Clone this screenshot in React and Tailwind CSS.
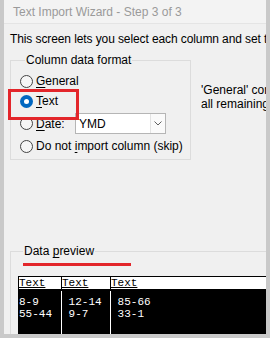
import React from 'react';

const ui = { fontFamily: '"Segoe UI", "Liberation Sans", Arial, sans-serif' };
const mono = { fontFamily: '"Liberation Mono", "Courier New", monospace' };

function Radio({ checked }) {
  if (checked) {
    return (
      <span className="w-[13px] h-[13px] rounded-full bg-[#0067c0] flex items-center justify-center shrink-0">
        <span className="w-[5px] h-[5px] rounded-full bg-white" />
      </span>
    );
  }
  return <span className="w-[13px] h-[13px] rounded-full border border-[#444] bg-[#f6f6f6] shrink-0" />;
}

export default function App() {
  const rows = [
    ['8-9', ' 12-14', ' 85-66'],
    ['55-44', ' 9-7', ' 33-1'],
  ];
  const widths = ['w-[43px] border-r', 'w-[49px] border-r', 'flex-1'];

  return (
    <div className="w-[270px] h-[338px] bg-[#c9c9c9] pl-[4px] pr-[4px] pb-[4px] overflow-hidden" style={ui}>
      <div className="h-full bg-[#f0f0f0] flex flex-col overflow-hidden text-[12px] text-black">
        {/* title bar */}
        <div className="h-[24px] shrink-0 flex items-center pl-[9px] bg-[#f3f3f3] border-b border-[#e4e4e4] text-[#9a9a9a] whitespace-nowrap">
          Text Import Wizard - Step 3 of 3
        </div>

        <div className="mt-[7px] pl-[6px] leading-[16px] whitespace-nowrap tracking-[-0.1px]">
          This screen lets you select each column and set the Data Format.
        </div>

        <div className="mt-[5px] flex items-start">
          <fieldset className="relative ml-[6px] w-[181px] shrink-0 border border-[#dcdcdc] pl-[9px] pb-[3px]">
            <legend className="ml-[5px] px-[1px] leading-[16px]">Column data format</legend>

            <div className="mt-[3px] h-[20px] flex items-center gap-[3px]">
              <Radio />
              <span><u className="underline-offset-2">G</u>eneral</span>
            </div>
            <div className="h-[20px] flex items-center gap-[3px]">
              <Radio checked />
              <span><u className="underline-offset-2">T</u>ext</span>
            </div>
            <div className="h-[25px] flex items-center gap-[3px]">
              <Radio />
              <span className="w-[36px]"><u className="underline-offset-2">D</u>ate:</span>
              <div className="w-[91px] h-[21px] bg-white border border-[#b5b5b5] flex items-stretch">
                <span className="flex-1 flex items-center pl-[3px]">YMD</span>
                <span className="w-[15px] border-l border-[#e3e3e3] bg-[#fafafa] flex items-center justify-center">
                  <svg width="8" height="5" viewBox="0 0 8 5">
                    <path d="M0.5 0.5 L4 4 L7.5 0.5" fill="none" stroke="#606060" strokeWidth="1" />
                  </svg>
                </span>
              </div>
            </div>
            <div className="h-[20px] flex items-center gap-[3px]">
              <Radio />
              <span className="whitespace-nowrap">Do not <u className="underline-offset-2">i</u>mport column (skip)</span>
            </div>

            {/* red highlight around the selected option */}
            <div className="absolute left-[-3px] top-[21px] w-[71px] h-[31px] border-[3px] border-[#e3262b]" />
          </fieldset>

          <div className="ml-[10px] mt-[31px] leading-[14px] whitespace-nowrap">
            <div>'General' converts numeric values to numbers,</div>
            <div>all remaining values to text.</div>
          </div>
        </div>

        <fieldset className="mt-[83px] ml-[6px] mr-[-20px] flex-1 border border-[#dcdcdc] pl-[7px] pb-[20px] min-h-[120px]">
          <legend className="ml-[5px] px-[1px] leading-[16px]">Data <u className="underline-offset-2">p</u>review</legend>
          <div className="mt-[4px] ml-[5px] w-[108px] h-[3px] bg-[#e3262b]" />

          <div className="mt-[10px] border-t border-l border-black text-[11px] leading-[12px]" style={mono}>
            <div className="flex h-[14px] bg-white border-b-2 border-black items-end">
              {widths.map((w, i) => (
                <div key={i} className={`${w} border-black`}>
                  <u className="underline-offset-1">Text</u>
                </div>
              ))}
            </div>
            <div className="flex bg-black text-white h-[60px]">
              {widths.map((w, c) => (
                <div key={c} className={`${w} border-white pt-[5px] flex flex-col`}>
                  {rows.map((r, i) => (
                    <div key={i} className="h-[12px] whitespace-pre">{r[c]}</div>
                  ))}
                </div>
              ))}
            </div>
          </div>
        </fieldset>
      </div>
    </div>
  );
}
